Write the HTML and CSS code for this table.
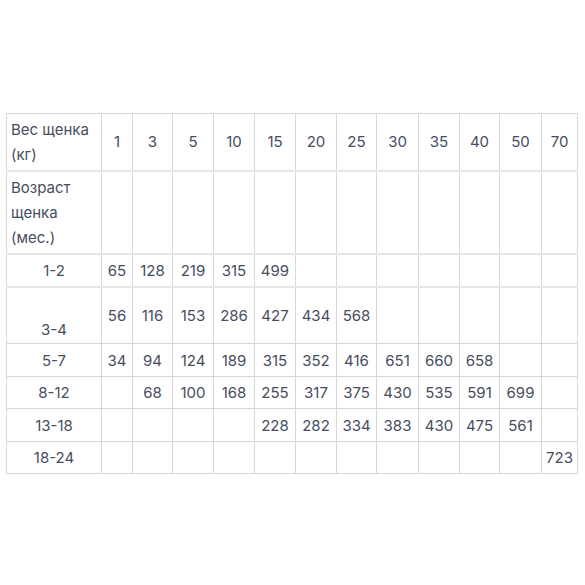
FILE: index.html
```html
<!DOCTYPE html>
<html lang="ru">
<head>
<meta charset="utf-8">
<link rel="stylesheet" href="styles.css">
</head>
<body>
<div class="page">
<table class="feed">
  <colgroup>
    <col class="c-label">
    <col class="c1"><col class="c2"><col class="c3"><col class="c3"><col class="c3">
    <col class="c3"><col class="c2"><col class="c4"><col class="c3"><col class="c2"><col class="c4"><col class="c5">
  </colgroup>
  <tr class="r-head">
    <td class="label">Вес щенка<br>(кг)</td>
    <td>1</td><td>3</td><td>5</td><td>10</td><td>15</td><td>20</td><td>25</td><td>30</td><td>35</td><td>40</td><td>50</td><td>70</td>
  </tr>
  <tr class="r-age thick">
    <td class="label">Возраст<br>щенка<br>(мес.)</td>
    <td></td><td></td><td></td><td></td><td></td><td></td><td></td><td></td><td></td><td></td><td></td><td></td>
  </tr>
  <tr class="r-33 thick">
    <td class="age">1-2</td>
    <td>65</td><td>128</td><td>219</td><td>315</td><td>499</td><td></td><td></td><td></td><td></td><td></td><td></td><td></td>
  </tr>
  <tr class="r-57 thick">
    <td class="age low">3-4</td>
    <td>56</td><td>116</td><td>153</td><td>286</td><td>427</td><td>434</td><td>568</td><td></td><td></td><td></td><td></td><td></td>
  </tr>
  <tr class="r-33">
    <td class="age">5-7</td>
    <td>34</td><td>94</td><td>124</td><td>189</td><td>315</td><td>352</td><td>416</td><td>651</td><td>660</td><td>658</td><td></td><td></td>
  </tr>
  <tr class="r-32">
    <td class="age">8-12</td>
    <td></td><td>68</td><td>100</td><td>168</td><td>255</td><td>317</td><td>375</td><td>430</td><td>535</td><td>591</td><td>699</td><td></td>
  </tr>
  <tr class="r-33">
    <td class="age">13-18</td>
    <td></td><td></td><td></td><td></td><td>228</td><td>282</td><td>334</td><td>383</td><td>430</td><td>475</td><td>561</td><td></td>
  </tr>
  <tr class="r-32">
    <td class="age">18-24</td>
    <td></td><td></td><td></td><td></td><td></td><td></td><td></td><td></td><td></td><td></td><td></td><td>723</td>
  </tr>
</table>
</div>
</body>
</html>
```

FILE: styles.css
```css
html, body {
  margin: 0;
  padding: 0;
  background: #ffffff;
}
.page {
  padding: 113px 0 0 6px;
}
.feed {
  border-collapse: collapse;
  table-layout: fixed;
  width: 572px;
  font-family: Inter, "Noto Sans", sans-serif;
  font-size: 15px;
  color: #474d5e;
  letter-spacing: 0;
}
.c-label { width: 95px; }
.c1 { width: 31px; }
.c2 { width: 40px; }
.c3 { width: 41px; }
.c4 { width: 42px; }
.c5 { width: 36px; }
.feed td {
  border: 1px solid #d8d8d8;
  padding: 0;
  text-align: center;
  vertical-align: middle;
  line-height: 25px;
}
.feed tr.thick td {
  border-top: 2px solid #e6e6e6;
}
.feed td.label {
  text-align: left;
  padding-left: 4px;
}
.r-head { height: 57px; }
.r-age { height: 83px; }
.r-33 { height: 33px; }
.r-32 { height: 32px; }
.r-57 { height: 57px; }
.feed td.low {
  padding-top: 28px;
}
```
